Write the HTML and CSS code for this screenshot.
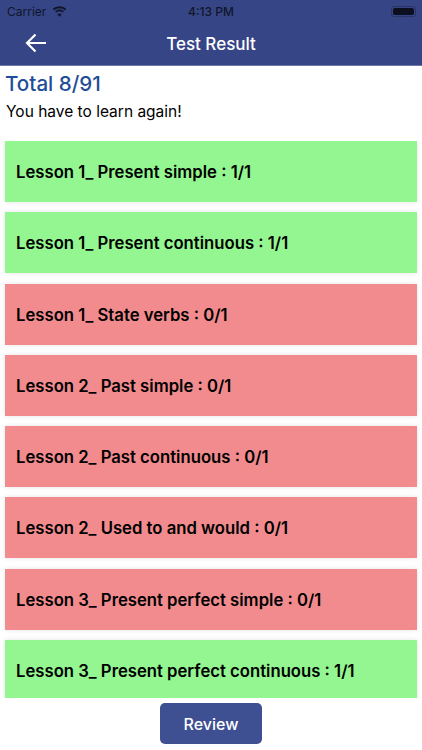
FILE: index.html
```html
<!DOCTYPE html>
<html>

<head>
    <title>Test Result</title>
    <link rel="stylesheet" href="styles.css">
</head>

<body>
    <div class="app">
        <header class="top-bar">
            <div class="status-bar">
                <div class="status-left">
                    <span>Carrier</span>
                    <svg class="wifi-icon" width="15" height="11" viewBox="0 0 15 11">
                        <path d="M7.5 2.2c2.1 0 4 .8 5.5 2.2l1.2-1.3C12.4 1.3 10 .3 7.5.3S2.6 1.3.8 3.1L2 4.4c1.5-1.4 3.4-2.2 5.5-2.2z" />
                        <path d="M7.5 5.3c1.2 0 2.3.5 3.2 1.3l1.2-1.3C10.7 4.1 9.2 3.5 7.5 3.5s-3.2.6-4.4 1.8l1.2 1.3c.9-.8 2-1.3 3.2-1.3z" />
                        <path d="M7.5 10.8l2.1-2.3c-.5-.6-1.3-.9-2.1-.9s-1.600.3-2.100.9z" />
                    </svg>
                </div>
                <span class="status-time">4:13 PM</span>
                <div class="battery">
                    <div class="battery-level"></div>
                </div>
            </div>
            <div class="nav-bar">
                <svg class="back-icon" width="22" height="20" viewBox="0 0 22 20">
                    <path d="M21 10H2M10.5 1.5L2 10l8.5 8.5" />
                </svg>
                <h1 class="nav-title">Test Result</h1>
            </div>
        </header>

        <div class="summary">
            <h2 class="total">Total 8/91</h2>
            <p class="message">You have to learn again!</p>
        </div>

        <div class="lesson-list">
            <div class="lesson pass">Lesson 1_ Present simple : 1/1</div>
            <div class="lesson pass">Lesson 1_ Present continuous : 1/1</div>
            <div class="lesson fail">Lesson 1_ State verbs : 0/1</div>
            <div class="lesson fail">Lesson 2_ Past simple : 0/1</div>
            <div class="lesson fail">Lesson 2_ Past continuous : 0/1</div>
            <div class="lesson fail">Lesson 2_ Used to and would : 0/1</div>
            <div class="lesson fail">Lesson 3_ Present perfect simple : 0/1</div>
            <div class="lesson pass">Lesson 3_ Present perfect continuous : 1/1</div>
        </div>

        <div class="footer">
            <button class="review-button">Review</button>
        </div>
    </div>
</body>

</html>
```

FILE: styles.css
```css
* {
    box-sizing: border-box;
}

body {
    margin: 0;
    background-color: #fff;
}

.app {
    display: flex;
    flex-direction: column;
    height: 750px;
    overflow: hidden;
    font-family: Inter, "Liberation Sans", sans-serif;
    color: #000;
}

.top-bar {
    height: 66px;
    flex-shrink: 0;
    background-color: #364586;
    border-bottom: 1px solid #6a78a8;
}

.status-bar {
    display: flex;
    align-items: center;
    justify-content: space-between;
    position: relative;
    height: 22px;
    padding: 0 6px 0 7px;
    font-size: 12px;
    color: #11152a;
}

.status-left {
    display: flex;
    align-items: center;
    gap: 6px;
}

.wifi-icon {
    fill: #11152a;
}

.status-time {
    position: absolute;
    left: 0;
    right: 0;
    text-align: center;
    font-weight: 500;
}

.battery {
    width: 25px;
    height: 11px;
    padding: 1px;
    border: 1px solid #2a3566;
    border-radius: 3px;
}

.battery-level {
    height: 100%;
    background-color: #0c0f20;
    border-radius: 2px;
}

.nav-bar {
    display: flex;
    align-items: center;
    justify-content: center;
    position: relative;
    height: 43px;
}

.back-icon {
    position: absolute;
    left: 25px;
    top: 11px;
    fill: none;
    stroke: #fff;
    stroke-width: 2.2;
}

.nav-title {
    margin: 0;
    font-size: 17px;
    font-weight: 500;
    color: #fff;
}

.summary {
    height: 75px;
    flex-shrink: 0;
    padding: 5px 5px 0 6px;
}

.total {
    margin: 0 0 0 -1px;
    font-size: 20.6px;
    line-height: 26px;
    font-weight: 500;
    color: #1f4d98;
}

.message {
    margin: 4px 0 0;
    font-size: 15.5px;
    line-height: 22px;
}

.lesson-list {
    display: flex;
    flex-direction: column;
    flex: 1;
    gap: 10.3px;
    overflow: hidden;
    padding: 0 5px;
}

.lesson {
    display: flex;
    align-items: center;
    height: 61px;
    flex-shrink: 0;
    padding: 1px 0 0 11px;
    font-size: 16.7px;
    font-weight: 600;
    box-shadow: 0 0 5px 0 #e4e4e4;
}

.pass {
    background-color: #93f690;
}

.fail {
    background-color: #f28b8e;
}

.footer {
    display: flex;
    justify-content: center;
    height: 52px;
    flex-shrink: 0;
    padding-top: 5px;
}

.review-button {
    width: 102px;
    height: 41px;
    border: none;
    border-radius: 5px;
    background-color: #3e4f92;
    color: #fff;
    font-family: inherit;
    font-size: 16px;
    font-weight: 500;
}
```
